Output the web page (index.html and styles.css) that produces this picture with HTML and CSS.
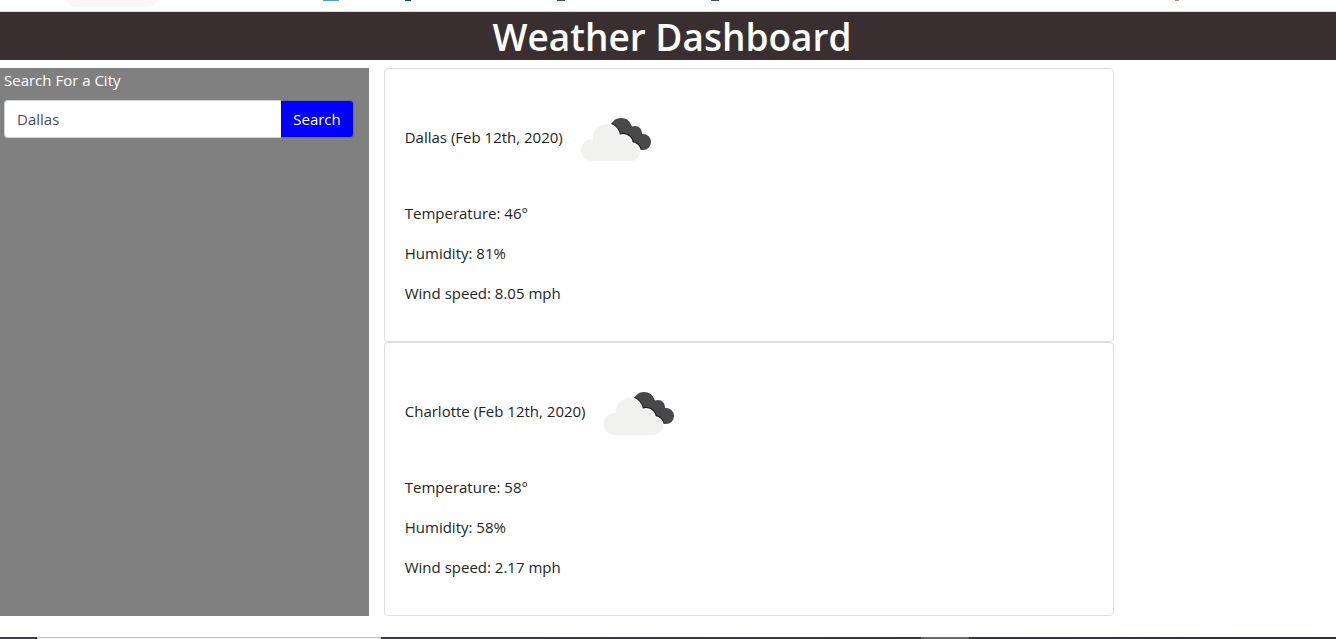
FILE: index.html
```
<!DOCTYPE html>
<html lang="en">
<head>
<meta charset="utf-8">
<title>Weather Dashboard</title>
<link rel="stylesheet" href="styles.css">
</head>
<body>
<svg class="sprite" width="0" height="0" aria-hidden="true">
  <clipPath id="back-cloud">
    <circle cx="52" cy="40" r="11"/>
    <circle cx="66" cy="44" r="7"/>
    <circle cx="74" cy="53" r="8"/>
    <path d="M42 44 60 34 72 46 74 61 66 58 50 55Z"/>
  </clipPath>
  <symbol id="broken-clouds" viewBox="0 0 96 96">
    <g clip-path="url(#back-cloud)">
      <path d="M0 0H96V96H0Z" fill="#48484a"/>
      <g fill="none" stroke="#1c1c1e" stroke-width="4">
        <circle cx="37" cy="48" r="13"/>
        <circle cx="54" cy="55" r="9"/>
        <circle cx="62" cy="63" r="9"/>
      </g>
    </g>
    <g fill="#fff" stroke="#fff" stroke-width="2">
      <circle cx="37" cy="48" r="13"/>
      <circle cx="54" cy="55" r="9"/>
      <circle cx="62" cy="63" r="9"/>
    </g>
    <g fill="#f1f1f0">
      <circle cx="23" cy="61" r="11"/>
      <circle cx="37" cy="48" r="13"/>
      <circle cx="54" cy="55" r="9"/>
      <circle cx="62" cy="63" r="9"/>
      <path d="M23 72V54L37 48 54 52 62 60V72Z"/>
    </g>
  </symbol>
</svg>
<div class="toolbar">
  <svg class="toolbar-marks" width="1336" height="11" aria-hidden="true">
    <path d="M65 0H158Q154 7 146 7H77Q69 7 65 0Z" fill="#f8f8f8"/>
    <path d="M323 0H339V1H323Z" fill="#4a9fdc"/>
    <path d="M405 0H411V1H405Z" fill="#1c4a80"/>
    <path d="M557 0H565V1H557ZM711 0H719V1H711Z" fill="#3f566b"/>
    <path d="M1175 0H1179V1H1175Z" fill="#9a90b4"/>
  </svg>
</div>
<header class="header"><h1 class="title">Weather Dashboard</h1></header>
<main class="layout">
  <aside class="sidebar">
    <form>
      <label class="search-label" for="city">Search For a City</label>
      <div class="search">
        <input class="search-input" id="city" type="text" value="Dallas">
        <button class="search-button" type="button">Search</button>
      </div>
    </form>
  </aside>
  <section class="cards">
    <article class="card">
      <p class="place">Dallas (Feb 12th, 2020)<svg class="icon" role="img" aria-label="Broken clouds"><use href="#broken-clouds"/></svg></p>
      <p class="fact">Temperature: 46°</p>
      <p class="fact">Humidity: 81%</p>
      <p class="fact">Wind speed: 8.05 mph</p>
    </article>
    <article class="card">
      <p class="place">Charlotte (Feb 12th, 2020)<svg class="icon" role="img" aria-label="Broken clouds"><use href="#broken-clouds"/></svg></p>
      <p class="fact">Temperature: 58°</p>
      <p class="fact">Humidity: 58%</p>
      <p class="fact">Wind speed: 2.17 mph</p>
    </article>
  </section>
</main>
<footer class="taskbar">
  <div class="taskbar-start"></div>
  <div class="taskbar-search"></div>
  <div class="taskbar-apps"></div>
  <div class="taskbar-active"></div>
</footer>
</body>
</html>
```
FILE: styles.css
```
* {
  box-sizing: border-box;
}

body {
  margin: 0;
  min-height: 100vh;
  display: flex;
  flex-direction: column;
  background: #fff;
  color: #212529;
  font: 15px/24px "Open Sans", sans-serif;
}

.sprite {
  position: absolute;
}

.toolbar {
  height: 12px;
  overflow: hidden;
  border-bottom: 1px solid #dcdbdd;
}

.toolbar-marks {
  display: block;
}

.header {
  margin-bottom: 8px;
  padding-left: 8px;
  background: #392f30;
  color: #fff;
  text-align: center;
}

.title {
  margin: 0;
  padding-top: 2px;
  font-size: 37px;
  font-weight: 600;
  line-height: 46px;
}

.layout {
  display: grid;
  grid-template-columns: 27.6% 54.65%;
  column-gap: 15px;
}

.sidebar {
  padding: 0 15px 0 4px;
  background: #808080;
  color: #fff;
}

.search-label {
  display: block;
  margin-bottom: 8px;
}

.search {
  display: flex;
}

.search-input {
  flex: 1;
  min-width: 0;
  height: 38px;
  padding: 6px 12px;
  border: 1px solid #ced4da;
  border-right: 0;
  border-radius: 4px 0 0 4px;
  background: #fff;
  color: #495057;
  font: inherit;
}

.search-button {
  height: 38px;
  padding: 0 12px;
  border: 1px solid #6c757d;
  border-left: 0;
  border-radius: 0 4px 4px 0;
  background: #00f;
  color: #fff;
  font: inherit;
}

.card {
  padding: 20px;
  border: 1px solid #dfdfdf;
  border-radius: 4px;
}

.place {
  display: flex;
  align-items: center;
  gap: 6px;
  margin: 0 0 16px;
}

.icon {
  width: 96px;
  height: 96px;
}

.fact {
  margin: 0 0 16px;
}

.taskbar {
  display: flex;
  height: 2px;
  margin-top: auto;
  background: linear-gradient(90deg, #3c4046, #37383c 70%, #2f2d40);
}

.taskbar-start {
  width: 37px;
}

.taskbar-search {
  width: 344px;
  border: 1px solid #bfbfbf;
  border-bottom: 0;
  background: #f2f2f2;
}

.taskbar-apps {
  width: 540px;
}

.taskbar-active {
  width: 48px;
  background: #66686c;
}
```
